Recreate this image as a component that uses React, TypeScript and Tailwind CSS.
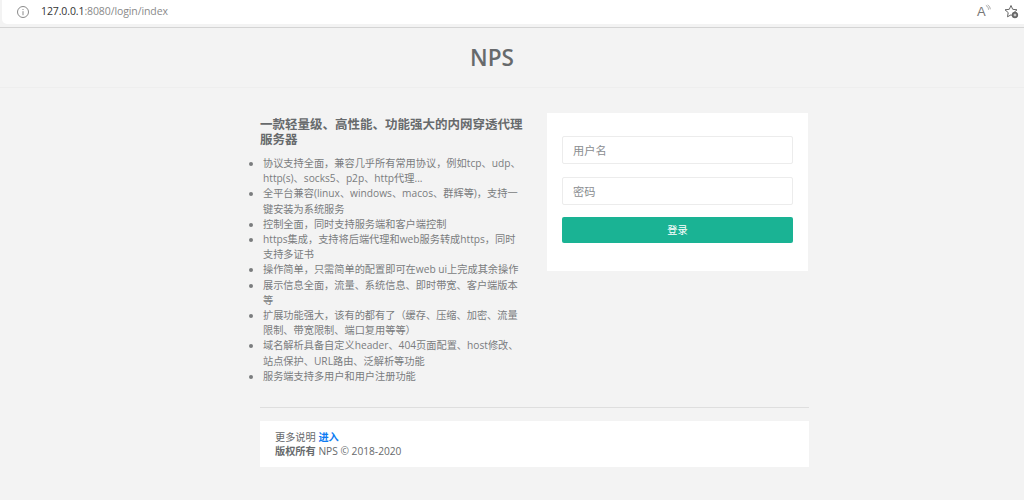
import React from "react";

const items = [
  "协议支持全面，兼容几乎所有常用协议，例如tcp、udp、http(s)、socks5、p2p、http代理...",
  "全平台兼容(linux、windows、macos、群辉等)，支持一键安装为系统服务",
  "控制全面，同时支持服务端和客户端控制",
  "https集成，支持将后端代理和web服务转成https，同时支持多证书",
  "操作简单，只需简单的配置即可在web ui上完成其余操作",
  "展示信息全面，流量、系统信息、即时带宽、客户端版本等",
  "扩展功能强大，该有的都有了（缓存、压缩、加密、流量限制、带宽限制、端口复用等等）",
  "域名解析具备自定义header、404页面配置、host修改、站点保护、URL路由、泛解析等功能",
  "服务端支持多用户和用户注册功能",
];

export default function App() {
  return (
    <div className="h-[500px] w-[1024px] overflow-hidden bg-[#f3f3f3] text-[#676a6c] [font-family:'Open_Sans','Noto_Sans_CJK_SC',sans-serif]">
      <div className="h-[28px] border-b border-[#d4d4d4] pl-[2px]">
        <div className="flex h-[24px] items-center rounded-bl-[5px] bg-white pl-[14px]">
          <svg width="14" height="14" viewBox="0 0 14 14" fill="none" stroke="#8a8a8a" strokeWidth="1">
            <circle cx="7" cy="7" r="5.5" />
            <path d="M7 6.2V10.2M7 4V5" />
          </svg>
          <span className="ml-[11px] text-[10.5px] tracking-[-0.1px] text-[#8a8a8a]">
            <span className="text-[#333]">127.0.0.1</span>:8080/login/index
          </span>
          <div className="ml-auto mr-[5px] flex items-center gap-[14px] pb-[1px]">
            <span className="relative w-[13px] text-[13px] leading-none text-[#777] [font-family:'Liberation_Sans',sans-serif]">
              A
              <svg className="absolute left-[8px] -top-[1px]" width="7" height="8" viewBox="0 0 8 8" fill="none" stroke="#888" strokeWidth="0.8">
                <path d="M1 1C3 2 4 4 4 6M3 0.5C5 1.5 6 3.5 6 5.5" />
              </svg>
            </span>
            <svg width="15" height="15" viewBox="0 0 15 15" fill="none">
              <path d="M7 1.5L8.7 5.3L13 5.8L9.9 8.6L10.5 12.8L7 10.8L3.5 12.8L4.2 8.6L1 5.8L5.3 5.3Z" stroke="#666" strokeWidth="1" />
              <circle cx="11" cy="11" r="3.2" fill="#666" />
              <path d="M9.6 11H12.4M11 9.6V12.4" stroke="#fff" strokeWidth="0.8" />
            </svg>
          </div>
        </div>
      </div>

      <div className="flex h-[60px] items-center justify-center border-b border-[#eeeeee] pr-[40px] text-[22.5px] font-semibold text-[#676a6c]">
        NPS
      </div>

      <div className="ml-[260px] mt-[25px] w-[549px]">
        <div className="flex h-[281px] items-start">
          <div className="w-[264px] shrink-0">
            <h2 className="mt-[4px] text-[12.5px] font-semibold leading-[15px] text-[#676a6c]">
              一款轻量级、高性能、功能强大的内网穿透代理服务器
            </h2>
            <ul className="mt-[9px] list-disc pl-[3px] text-[10.2px] leading-[15.2px] text-[#7a7c7e]">
              {items.map((t) => (
                <li key={t}>{t}</li>
              ))}
            </ul>
          </div>
          <div className="ml-[23px] flex h-[158px] w-[261px] flex-col bg-white px-[15px] pt-[23px]">
            <div className="flex h-[28px] items-center rounded-[2px] border border-[#ececec] px-[10px] pt-[2px] text-[11.2px] text-[#8a8d90]">用户名</div>
            <div className="mt-[13px] flex h-[28px] items-center rounded-[2px] border border-[#ececec] px-[10px] pt-[2px] text-[11.2px] text-[#8a8d90]">密码</div>
            <button className="mt-[12px] h-[26px] rounded-[2px] bg-[#1ab394] pt-[2px] text-[10.2px] text-white">登录</button>
          </div>
        </div>

        <div className="mt-[13px] border-t border-[#dedede] pt-[13px]">
          <div className="h-[46px] bg-white pl-[15px] pt-[9px] text-[10.2px] leading-[14px] text-[#676a6c]">
            <div>更多说明 <a className="font-semibold text-[#0d7bf2]">进入</a></div>
            <div><b className="font-semibold">版权所有</b> NPS © 2018-2020</div>
          </div>
        </div>
      </div>
    </div>
  );
}
